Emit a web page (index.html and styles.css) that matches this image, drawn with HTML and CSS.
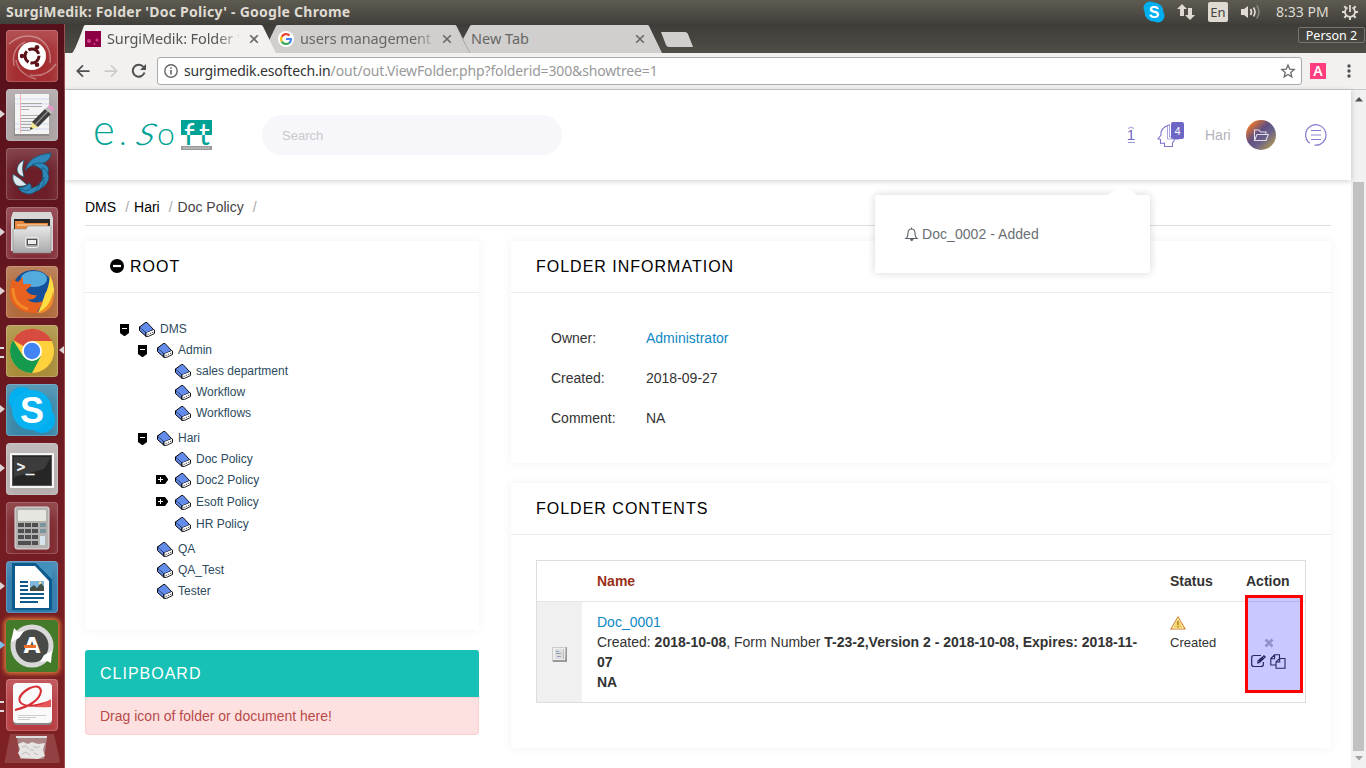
FILE: index.html
```html
<!DOCTYPE html>
<html lang="en">
<head>
<meta charset="utf-8">
<title>SurgiMedik: Folder 'Doc Policy'</title>
<link rel="stylesheet" href="styles.css">
</head>
<body>
<svg class="defs" width="0" height="0">
  <defs>
    <linearGradient id="steel" x1="0" y1="0" x2="0" y2="1"><stop offset="0" stop-color="#e8e8e8"/><stop offset="1" stop-color="#a9a9a9"/></linearGradient>
    <symbol id="book" viewBox="0 0 16 15"><path d="M.5 5 6.500 .5H8L14.500 7.500 7 10.500 .5 5Z" fill="#638cea" stroke="#000"/><path d="M.5 5V8.500L7 14.300V10.500Z" fill="#638cea" stroke="#000"/><path d="M7 10.500 14.500 7.500 15.500 8V11.500L9.500 14.400H7Z" fill="#fff" stroke="#000" stroke-width=".9"/><path d="M1 5.500 7 10.500 14 7.500 8 1.200Z" fill="#638cea"/><path d="M8.500 12.700 14.500 10" stroke="#000" stroke-width=".7" stroke-dasharray="1.500 1"/></symbol>
    <symbol id="open" viewBox="0 0 12 12"><path d="M0 0H9V9L5 12 4 12 0 9Z"/><path d="M2 4.500H7" stroke="#fff"/></symbol>
    <symbol id="closed" viewBox="0 0 12 12"><path d="M0 1H9L12 5 12 6 9 10H0Z"/><path d="M2 5.500H7M4.500 3V8" stroke="#fff"/></symbol>
    <symbol id="close" viewBox="0 0 10 10"><path d="M1.200 1.200 8.800 8.800M8.800 1.200 1.200 8.800" stroke="#686868" stroke-width="1.600"/></symbol>
  </defs>
</svg>

<header class="menubar">
  <span class="window-title">SurgiMedik: Folder 'Doc Policy' - Google Chrome</span>
  <div class="indicators">
    <svg class="ind-skype" viewBox="0 0 22 22"><circle cx="7" cy="7" r="6.500" fill="#00aff0"/><circle cx="15" cy="15" r="6.500" fill="#00aff0"/><circle cx="11" cy="11" r="9.500" fill="#00aff0"/><text x="11" y="17" text-anchor="middle" class="skype-mini">S</text></svg>
    <svg class="ind-net" viewBox="0 0 18 16" fill="#dfdbd2"><path d="M5 0 10 5H7V12H3V5H0ZM13 16 8 11H11V4H15V11H18Z"/></svg>
    <span class="lang">En</span>
    <svg class="ind-vol" viewBox="0 0 20 16"><path d="M0 5H3L7 2V14L3 11H0Z" fill="#dfdbd2"/><path d="M9.500 5Q11.500 8 9.500 11M12.500 3.500Q15.500 8 12.500 12.500" fill="none" stroke="#dfdbd2" stroke-width="1.700"/><path d="M15.800 1.500Q20 8 15.800 14.500" fill="none" stroke="#85837b" stroke-width="1.700"/></svg>
    <span class="clock">8:33 PM</span>
    <svg class="ind-gear" viewBox="0 0 16 16" fill="none" stroke="#dfdbd2"><path d="M5.500 3.600A5 5 0 1 0 10.500 3.600" stroke-width="1.700"/><path d="M8 1V8" stroke-width="1.800"/><path d="M0 8H3M13 8H16M8 13V16M2.300 2.300 4.300 4.300M13.700 2.300 11.700 4.300M2.300 13.700 4.300 11.700M13.700 13.700 11.700 11.700" stroke-width="2"/></svg>
  </div>
</header>

<div class="desktop">
<nav class="launcher">
  <div class="tile dash"><svg viewBox="0 0 52 52"><path d="M3 14Q16 2 32 8 46 16 44 33M8 36Q5 18 19 12M24 45Q40 48 50 34M10 30Q12 44 30 49" fill="none" stroke="#fff" stroke-opacity=".35" stroke-width="1.500"/><circle cx="26" cy="26" r="14" fill="#fff"/><circle cx="26" cy="26" r="7" fill="none" stroke="#5c1218" stroke-width="3" stroke-dasharray="12.500 2"/><circle cx="16" cy="26" r="2.300" fill="#5c1218"/><circle cx="31" cy="17.300" r="2.300" fill="#5c1218"/><circle cx="31" cy="34.700" r="2.300" fill="#5c1218"/></svg></div>
  <div class="tile editor running"><svg viewBox="0 0 52 52"><path d="M9 6H43V47H8Z" fill="#8f8b8b"/><path d="M9 5H43V45H9Z" fill="#f4f4f4"/><path d="M9 10H43M9 15H43M9 35H43M9 40H43" stroke="#cfdaf0"/><path d="M15 14.500H36M15 17.500H36M15 20.500H23M15 26.500H36M15 29.500H32M15 32.500H29M15 35.500H27M15 38.500H28M15 41.500H24" stroke="#aaa"/><path d="M14.500 5V44" stroke="#f4b6b6"/><path d="M24 41 26 33 32 38Z" fill="#f5e78c"/><path d="M26 33 39 20 45 25 32 38Z" fill="#3c3c3c"/><path d="M29 36 42 22" stroke="#888" stroke-width="1.500"/><path d="M39 20 41 18 47 23 45 25Z" fill="#bbb"/><path d="M41 18 44 16 48 19 47 23Z" fill="#e798ca"/><path d="M24 41 24.700 38 27 39.500Z" fill="#222"/></svg></div>
  <div class="tile shutter"><svg viewBox="0 0 52 52" fill="#2f86b8" stroke="#12536f" stroke-width=".7"><path d="M19 23Q22 7 45 5 45 13 35 16 24 16 19 23Z"/><path d="M26 17Q36 12 42 19 44 24 39 29 37 19 26 17Z"/><path d="M38 20Q46 28 41 35 38 40 34 40 38 30 36 20Z"/><path d="M38 29Q39 41 29 44 24 45 22 43 33 39 38 29Z"/><path d="M34 36Q29 47 22 46 15 45 12 40 25 43 34 36Z"/><path d="M18 12Q15 20 18 29 11 27 11 21 12 15 18 12Z" fill="#dce8ec"/><path d="M7 26Q14 30 21 37 12 40 9 36 6 32 7 26Z" fill="#dce8ec"/><path d="M12 40Q21 39 23 35 29 40 20 43Z"/></svg></div>
  <div class="tile files running"><svg viewBox="0 0 52 52"><path d="M7 5H45L47 11V44H5V11Z" fill="#d7d7d7"/><path d="M8 12H44V25H8Z" fill="#282828"/><path d="M9 19V14H17L19 16H42V24H9Z" fill="#e8863c"/><path d="M11 18H41" stroke="#fae2bb"/><path d="M7 22H20L22 19H45V46H7Z" fill="url(#steel)" stroke="#888" stroke-width=".6"/><rect x="19.500" y="30.500" width="13" height="10" rx="2" fill="#aaa" stroke="#eee"/><rect x="21.500" y="32.500" width="9" height="5" fill="#eee" stroke="#555"/></svg></div>
  <div class="tile firefox running"><svg viewBox="0 0 52 52"><circle cx="27" cy="25" r="21" fill="#14519a"/><ellipse cx="28" cy="13" rx="13" ry="8" fill="#53aadd"/><path d="M44 9Q51 24 46 34 42 43 32 47 37 35 39 28 43 22 44 9Z" fill="#ffdc3f"/><path d="M6 13 12 16 17 11 17 18 25 18 25 20 20 24Q23 30 31 29 28 35 21 33 27 39 37 35 34 43 30 47 13 48 6 36 2 28 5 19Z" fill="#e9611e"/><path d="M7 22Q7 39 22 43" fill="none" stroke="#f28a28" stroke-width="3"/><path d="M30 47Q44 43 47 25 50 42 36 47Z" fill="#f28a28"/></svg></div>
  <div class="tile chrome running multi active"><svg viewBox="0 0 52 52"><circle cx="26" cy="26" r="22" fill="#ffd23d"/><path d="M26 26 7 15A22 22 0 0 1 46 16H26Z" fill="#d84b3f"/><path d="M7 15A22 22 0 0 0 26 48L35 31 26 36 17 31Z" fill="#14994d"/><circle cx="26" cy="26" r="10" fill="#fff"/><circle cx="26" cy="26" r="8.200" fill="#4384f4"/></svg></div>
  <div class="tile skype running"><svg viewBox="0 0 52 52"><circle cx="16" cy="16" r="13" fill="#00aff0"/><circle cx="36" cy="36" r="13" fill="#00aff0"/><circle cx="26" cy="26" r="20" fill="#08b2f1"/><text x="26" y="39" text-anchor="middle" class="skype-letter">S</text></svg></div>
  <div class="tile terminal running"><svg viewBox="0 0 52 52"><rect x="4" y="10" width="44" height="35" fill="#f5f5f5"/><rect x="6.500" y="12.500" width="39" height="30" fill="#262626" stroke="#555"/><path d="M8 14H45L38 26 8 34Z" fill="#fff" opacity=".1"/><text x="10.500" y="29" class="prompt">&gt;_</text></svg></div>
  <div class="tile calc"><svg viewBox="0 0 52 52"><rect x="9" y="5" width="34" height="42" rx="2" fill="#b4b2ae" stroke="#ddd"/><rect x="12" y="8" width="28" height="11" rx="1" fill="#e4e6df"/><g fill="#4d4f50"><path d="M12 21h6v4h-6zM19 21h6v4h-6zM26 21h6v4h-6zM12 27h6v4h-6zM19 27h6v4h-6zM26 27h6v4h-6zM12 33h6v4h-6zM19 33h6v4h-6zM26 33h6v4h-6zM12 39h13v4h-13zM26 39h6v4h-6z"/></g><path d="M34 21h6v4h-6zM34 27h6v4h-6z" fill="#7d949f"/><path d="M34 34h5v9h-5z" fill="#d6e4ef"/></svg></div>
  <div class="tile writer running"><svg viewBox="0 0 52 52"><path d="M6 2H30L46 18V49H6Z" fill="#0d5a8c"/><path d="M30 2H46V18Z" fill="#438fbb"/><path d="M9 5H29L43 20V47H9Z" fill="#fff"/><path d="M14 21H22M14 25H22M14 29H22M14 33H38M14 37H38M14 41H32" stroke="#0d5a8c" stroke-width="2"/><rect x="24" y="20" width="14" height="10" fill="#7db9df"/><path d="M24 30V27L28 24 31 27 35 22 38 26V30Z" fill="#454e42"/><circle cx="34" cy="22" r="1.300" fill="#ffe08b"/></svg></div>
  <div class="tile updater running urgent"><svg viewBox="0 0 52 52"><circle cx="26" cy="26" r="19" fill="#484a48" stroke="#d8d8d8" stroke-width="5"/><path d="M5 22 8 8 12 12 18 11 13 18Z" fill="#fff"/><path d="M46 31 45 43 41 41 34 42 38 35Z" fill="#fff"/><text x="26" y="33" text-anchor="middle" class="updater-letter">A</text><rect x="18" y="25" width="12" height="3" fill="#ed702a"/></svg></div>
  <div class="tile reader running multi"><svg viewBox="0 0 52 52"><rect x="7" y="5" width="39" height="41" rx="4" fill="#888"/><rect x="7" y="4" width="39" height="40" rx="4" fill="#fafafa"/><path d="M9 31Q33 25 35 12 34 5 24 9 11 16 14 23 20 31 45 22" fill="none" stroke="#d72f35" stroke-width="2"/><path d="M19 27Q31 30 45 20V28Q30 29 19 27Z" fill="#e5575a"/><path d="M12 36.500H40M12 38.500H30M12 40.500H24" stroke="#ccc"/></svg></div>
  <div class="trash"><svg viewBox="0 0 56 30"><path d="M6 1H50L56 28Q56 30 54 30H2Q0 30 1 27Z" fill="#934043"/><path d="M13 4H43L40 26H16Z" fill="#aa8686"/><path d="M12 4H43" stroke="#ddd" stroke-width="2"/><path d="M14 11 19 9 24 11 28 9 34 11 41 10 39 17 41 23 34 26 17 25 14 20 16 16Z" fill="#e7e4e3"/><path d="M18 14 22 13 25 16M29 13 33 15 36 13M18 21 22 19 26 22M30 20 34 22M26 17 30 17" fill="none" stroke="#bbb"/></svg></div>
</nav>

<section class="browser">
  <div class="tabstrip">
    <div class="tab tab-active"><svg class="tab-shape" viewBox="0 0 206 29"><path d="M0 29Q3 27 12 1.500Q12.500 1 14 1H189Q190.500 1 191 2.500L204 29Z" fill="#f2f1f0"/></svg>
      <svg class="favicon" viewBox="0 0 16 16"><path d="M0 0H16V16H0Z" fill="#8e0045"/><g fill="#d34189"><circle cx="4" cy="10" r="2"/><circle cx="12" cy="9" r="1.500"/><circle cx="9.500" cy="13" r="1"/></g></svg>
      <span class="tab-label first">SurgiMedik: Folder '</span><svg class="tab-close"><use href="#close"/></svg></div>
    <div class="tab tab-mid"><svg class="tab-shape" viewBox="0 0 208 29"><path d="M0 29 13 2Q13.500 1 15 1H192Q193 1 193.500 2L207 29Z" fill="#d0cfcd"/><path d="M198 12 207 29" stroke="#aaa"/></svg>
      <svg class="favicon" viewBox="0 0 16 16"><circle cx="8" cy="8" r="8" fill="#fff"/><g fill="none" stroke-width="2.200"><path d="M3.700 5.700A5 5 0 0 1 11.600 4.500" stroke="#ea4335"/><path d="M3.700 5.700A5 5 0 0 0 3.800 10.600" stroke="#fbbc05"/><path d="M3.800 10.600A5 5 0 0 0 11.300 11.800" stroke="#34a853"/><path d="M11.300 11.800Q13 10.500 13 8H8" stroke="#4285f4"/></g></svg>
      <span class="tab-label second">users management</span><svg class="tab-close"><use href="#close"/></svg></div>
    <div class="tab tab-last"><svg class="tab-shape" viewBox="0 0 206 29"><path d="M6 15 13 2Q13.500 1 15 1H190Q191.500 1 192 2L205 29H12Z" fill="#d0cfcd"/></svg>
      <span class="tab-label third">New Tab</span><svg class="tab-close"><use href="#close"/></svg></div>
    <svg class="new-tab" viewBox="0 0 33 15"><path d="M0 0H24Q26 0 27 2L32 15H8Q6 15 5 13Z" fill="#d0cfcd"/></svg>
    <span class="profile">Person 2</span>
  </div>
  <div class="toolbar">
    <svg class="nav-icon" viewBox="0 0 16 16"><path d="M15.500 8H2M8 1.500 1.500 8 8 14.500" fill="none" stroke="#505050" stroke-width="2"/></svg>
    <svg class="nav-icon" viewBox="0 0 16 16"><path d="M.5 8H14M8 1.500 14.500 8 8 14.500" fill="none" stroke="#ccc" stroke-width="2"/></svg>
    <svg class="nav-icon reload" viewBox="0 0 16 16"><path d="M13.500 9.500A6 6 0 1 1 12.500 4" fill="none" stroke="#505050" stroke-width="2"/><path d="M15 1V7H9Z" fill="#505050"/></svg>
    <div class="omnibox">
      <svg class="info" viewBox="0 0 14 14"><circle cx="7" cy="7" r="6.200" fill="none" stroke="#666" stroke-width="1.400"/><path d="M7 6V10.500M7 3.200V4.700" stroke="#666" stroke-width="1.600"/></svg>
      <span class="url"><b>surgimedik.esoftech.in</b>/out/out.ViewFolder.php?folderid=300&amp;showtree=1</span>
      <svg class="star" viewBox="0 0 14 14"><path d="M7 1 8.700 5.100 13.200 5.500 9.800 8.400 10.800 12.900 7 10.500 3.200 12.900 4.200 8.400.8 5.500 5.300 5.100Z" fill="none" stroke="#6b6b6b" stroke-width="1.300"/></svg>
    </div>
    <span class="ext">A</span>
    <svg class="kebab" viewBox="0 0 4 14" fill="#505050"><circle cx="2" cy="2" r="1.700"/><circle cx="2" cy="7" r="1.700"/><circle cx="2" cy="12" r="1.700"/></svg>
  </div>

  <div class="viewport">
    <div class="page">
      <header class="site-header">
        <svg class="logo" viewBox="0 0 120 34">
          <defs><linearGradient id="ft" gradientUnits="userSpaceOnUse" x1="0" y1="0" x2="0" y2="30"><stop offset=".5" stop-color="#fff"/><stop offset=".5" stop-color="#00a296"/></linearGradient></defs>
          <rect x="86" y="0" width="31" height="15" fill="#00a296"/>
          <g class="logo-text"><text transform="translate(-2 25) scale(1.300 1.330)">e</text><text x="24" y="25">.</text><text transform="translate(38 25) skewX(-24) scale(1.350 1.330)">s</text><text x="62" y="25">o</text></g>
          <g class="logo-joined"><text x="89" y="25">f</text><text x="104" y="25">t</text></g>
          <rect x="86" y="26" width="31" height="4" fill="#999"/><path d="M88 28H115" stroke="#ddd" stroke-dasharray="2 .7"/>
        </svg>
        <div class="search">Search</div>
        <div class="user-tools">
          <svg class="tasks" viewBox="0 0 9 18"><path d="M1 2.500Q4-.5 7 2.500M1 16.500H8" fill="none" stroke="#9c97d8"/><text x="4" y="14" text-anchor="middle" class="tasks-num">1</text></svg>
          <div class="mind"><svg viewBox="0 0 27 26"><path d="M12 4Q3 7 4 14L1 18 3.500 18.500 3.500 22.500 7.500 22 7.500 25.500H15.500V22L18 18H22" fill="none" stroke="#7f78cc" stroke-width="1.100"/><path d="M10.500 5V18H20M12.500 3V16H22" fill="none" stroke="#aaa5dc"/></svg><span class="badge">4</span></div>
          <span class="user-name">Hari</span>
          <span class="avatar"><svg viewBox="0 0 16 13"><path d="M1.500 11V1H6L7.500 3H13V5.500M4 5.500H15.300L13 11.500H1.500Z" fill="none" stroke="#e0dce8" stroke-width="1.100"/></svg></span>
          <svg class="menu-icon" viewBox="0 0 22 22" fill="none"><path d="M6 20A10.200 10.200 0 1 1 11 21.200" transform="rotate(8 11 11)" stroke="#827cce" stroke-width="1.200"/><path d="M6 6.500H16M6 15.500H16" stroke="#827cce"/><path d="M6 11H16" stroke="#c4c1e9" stroke-width="2"/></svg>
        </div>
      </header>

      <aside class="notice"><svg class="bell" viewBox="0 0 13 14"><path d="M1 11.500Q3 10 3 5.500 3.500 2 6.500 2 9.500 2 10 5.500 10 10 12 11.500ZM6.500 2V.5" fill="none" stroke="#5b626b" stroke-width="1.100"/><path d="M5 12H8.500Q8.500 14 6.700 14 5 14 5 12Z" fill="#5b626b"/></svg>Doc_0002 - Added</aside>

      <main class="content">
        <div class="breadcrumb"><a>DMS</a><i>/</i><a>Hari</a><i>/</i><span>Doc Policy</span><i>/</i></div>
        <div class="columns">
          <div class="left">
            <section class="card tree-card">
              <h3><svg class="minus" viewBox="0 0 14 14"><circle cx="7" cy="7" r="7"/><path d="M3 7H11" stroke="#fff" stroke-width="2.200"/></svg>ROOT</h3>
              <ul class="tree">
                <li><svg class="toggle"><use href="#open"/></svg><svg class="book"><use href="#book"/></svg>DMS</li>
                <li class="l1"><svg class="toggle"><use href="#open"/></svg><svg class="book"><use href="#book"/></svg>Admin</li>
                <li class="l2"><svg class="book"><use href="#book"/></svg>sales department</li>
                <li class="l2"><svg class="book"><use href="#book"/></svg>Workflow</li>
                <li class="l2 branch-end"><svg class="book"><use href="#book"/></svg>Workflows</li>
                <li class="l1"><svg class="toggle"><use href="#open"/></svg><svg class="book"><use href="#book"/></svg>Hari</li>
                <li class="l2"><svg class="book"><use href="#book"/></svg>Doc Policy</li>
                <li class="l2 folded"><svg class="toggle"><use href="#closed"/></svg><svg class="book"><use href="#book"/></svg>Doc2 Policy</li>
                <li class="l2 folded"><svg class="toggle"><use href="#closed"/></svg><svg class="book"><use href="#book"/></svg>Esoft Policy</li>
                <li class="l2 branch-end"><svg class="book"><use href="#book"/></svg>HR Policy</li>
                <li class="l1"><svg class="book"><use href="#book"/></svg>QA</li>
                <li class="l1"><svg class="book"><use href="#book"/></svg>QA_Test</li>
                <li class="l1"><svg class="book"><use href="#book"/></svg>Tester</li>
              </ul>
            </section>
            <section class="clipboard"><h3>CLIPBOARD</h3><p>Drag icon of folder or document here!</p></section>
          </div>
          <div class="right">
            <section class="card info-card"><h3>FOLDER INFORMATION</h3>
              <dl><dt>Owner:</dt><dd><a class="link">Administrator</a></dd><dt>Created:</dt><dd>2018-09-27</dd><dt>Comment:</dt><dd>NA</dd></dl>
            </section>
            <section class="card contents-card"><h3>FOLDER CONTENTS</h3>
              <div class="doc-table">
                <div class="row head"><span></span><span class="name-head">Name</span><span>Status</span><span>Action</span></div>
                <div class="row body">
                  <div class="thumb"><svg viewBox="0 0 15 15"><path d="M0 0H15V15H0Z" fill="#999"/><path d="M0 0H14L13 13H1V15H0Z" fill="#ccc"/><path d="M1 1H13V13H1Z" fill="#eee"/><path d="M3 2H9L11 4V12H3Z" fill="#ddd"/><path d="M4 4.500H7M4 6.500H9M5 9.500H9" stroke="#91a0bb"/><path d="M11.500 2V12" stroke="#bbb"/></svg></div>
                  <div class="doc"><a class="link">Doc_0001</a><br>Created: <b>2018-10-08</b>, Form Number <b>T-23-2,Version 2 - 2018-10-08, Expires: 2018-11-<br>07<br>NA</b></div>
                  <div class="status"><svg viewBox="0 0 16 14"><path d="M8 1 15 13H1Z" fill="#ffe88b" stroke="#cc7b28" stroke-width="1.100"/><path d="M8 2.500 13.500 12H2.500Z" fill="#f3d166" stroke="#fff4c4" stroke-width=".7"/><path d="M8 5V9M8 10V11.500" stroke="#bd8a22" stroke-width="1.700"/></svg>Created</div>
                  <div class="actions">
                    <svg class="remove" viewBox="0 0 10 10"><path d="M1.500 1.500 8.500 8.500M8.500 1.500 1.500 8.500" stroke="#bbb" stroke-width="2.800"/></svg>
                    <div class="action-pair"><svg viewBox="0 0 16 14" fill="none" stroke="#333"><path d="M10 1.500H3Q.7 1.500.7 3.500V10.500Q.7 12.500 3 12.500H10Q12.300 12.500 12.300 10.500V8" stroke-width="1.200"/><path d="M6 9.500 6.500 6.500 13 1 15 3 8.500 9.300Z" fill="#333" stroke="none"/><path d="M7 7 8.500 8.500M11.500 2.500 13.500 4.500" stroke="#ccf" stroke-width=".7"/></svg><svg class="copy" viewBox="0 0 16 15" fill="none" stroke="#333" stroke-width="1.100"><path d="M6 11H.8V4.500L4.500.8H9.500V4M.8 4.800H4.600V.8M6 8 9.500 4.500H15V14.300H6ZM6 8H9.700V4.500"/></svg></div>
                  </div>
                </div>
                <div class="highlight"></div>
              </div>
            </section>
          </div>
        </div>
      </main>
    </div>
    <div class="scrollbar"><svg viewBox="0 0 8 5"><path d="M0 4.500 4 0 8 4.500Z" fill="#505050"/></svg><div class="thumb-bar"></div><svg viewBox="0 0 8 5"><path d="M0 0H8L4 4.500Z" fill="#a3a3a3"/></svg></div>
  </div>
</section>
</div>
</body>
</html>
```
FILE: styles.css
```css
* { box-sizing: border-box; }
body { margin: 0; width: 1366px; height: 768px; overflow: hidden; font: 14px/20px "Liberation Sans", Arial, sans-serif; color: #333; background: #fff; }
svg { display: block; flex: none; overflow: visible; }
.defs { position: absolute; }
h3, p, ul, dl, dd { margin: 0; padding: 0; }

.menubar { height: 24px; display: flex; justify-content: space-between; align-items: center; padding: 0 8px 0 6px; background: linear-gradient(#5e5b50, #56534b 30%, #403f3a); color: #dfdbd2; font-family: "Noto Sans", sans-serif; }
.window-title { font-size: 14px; font-weight: 700; letter-spacing: .25px; white-space: nowrap; }
.indicators { display: flex; align-items: center; }
.ind-skype { width: 22px; height: 22px; margin-right: 12px; }
.skype-mini { font: 700 16px "Liberation Sans", sans-serif; fill: #fff; }
.ind-net { width: 18px; height: 16px; margin-right: 13px; }
.lang { width: 20px; height: 20px; margin-right: 13px; background: #dfdbd2; border-radius: 2px; color: #45433e; font-size: 13px; line-height: 20px; text-align: center; }
.ind-vol { width: 20px; height: 16px; margin-right: 15px; }
.clock { width: 53px; margin-right: 13px; font-size: 14px; white-space: nowrap; letter-spacing: 0; }
.ind-gear { width: 16px; height: 16px; }

.desktop { height: 744px; display: flex; }
.launcher { width: 65px; padding: 6px 0 0 6px; background: linear-gradient(#55101a, #681820 40%, #7f2124); border-right: 1px solid #9a4f50; display: flex; flex-direction: column; gap: 7px; }
.tile { position: relative; width: 52px; height: 52px; flex: none; border-radius: 4px; box-shadow: inset 0 0 0 1px rgba(255,255,255,.18), inset 0 12px 14px rgba(255,255,255,.17); }
.tile svg { width: 52px; height: 52px; }
.dash { background: #a42e31; }
.editor { background: #aaa1a3; }
.shutter { background: #6c1f29; }
.files { background: #84303b; }
.firefox { background: #b06a3c; }
.chrome { background: #a98c38; }
.skype { background: #3a87a8; }
.terminal { background: #b6aeae; }
.calc { background: #7d272d; }
.writer { background: #2e79ab; }
.updater { background: #447b2b; }
.reader { background: #b73b40; }
.urgent { box-shadow: 0 0 4px 2px #dc7b3c; }
.running::before { content: ""; position: absolute; left: -6px; top: 21px; border: 4px solid transparent; border-left: 5px solid #dcd3d3; border-right: 0; }
.urgent::before { border-left-color: #79bfe8; }
.multi::before { border: 0; width: 4px; height: 7px; top: 22px; border-top: 2px solid #ddd; border-bottom: 2px solid #ddd; }
.active::after { content: ""; position: absolute; right: -6px; top: 21px; border: 4px solid transparent; border-right: 5px solid #dcd3d3; border-left: 0; }
.skype-letter { font: 700 36px "Liberation Sans", sans-serif; fill: #fff; }
.updater-letter { font: 700 22px "DejaVu Sans", sans-serif; fill: #fff; }
.prompt { font: 700 15px "DejaVu Sans Mono", monospace; fill: #eee; }
.trash { margin: -5px 0 0 -2px; }
.trash svg { width: 56px; height: 30px; }

.browser { width: 1301px; }
.tabstrip { height: 29px; padding-left: 7px; display: flex; background: linear-gradient(#3d3c38, #504e47); }
.tab { position: relative; height: 29px; display: flex; align-items: center; font-family: "Noto Sans", sans-serif; font-size: 14.500px; color: #666; }
.tab-shape { position: absolute; left: 0; top: 0; height: 29px; }
.tab-active { width: 191px; z-index: 3; padding-left: 13px; color: #555; }
.tab-active .tab-shape, .tab-last .tab-shape { width: 206px; }
.tab-mid { width: 194px; z-index: 2; padding-left: 15px; }
.tab-mid .tab-shape { width: 208px; }
.tab-last { width: 204px; padding-left: 14px; }
.favicon, .tab-label, .tab-close { position: relative; }
.favicon { width: 16px; height: 16px; }
.tab-label { white-space: nowrap; line-height: 20px; height: 22px; margin-left: 6px; }
.first { width: 134px; letter-spacing: -.1px; -webkit-mask-image: linear-gradient(90deg, #000 82%, transparent); mask-image: linear-gradient(90deg, #000 82%, transparent); }
.second { width: 134px; letter-spacing: -.1px; -webkit-mask-image: linear-gradient(90deg, #000 85%, rgba(0,0,0,.2)); mask-image: linear-gradient(90deg, #000 85%, rgba(0,0,0,.2)); }
.third { width: 158px; margin-left: 0; }
.tab-close { width: 10px; height: 10px; margin-left: 8px; }
.tab-last .tab-close { margin-left: 6px; }
.new-tab { width: 33px; height: 15px; margin: 8px 0 0 0; }
.profile { margin: 3px 1px 0 auto; height: 16px; width: 67px; border: 1px solid #77756e; border-radius: 2px; color: #fff; font: 12.500px/15px "Noto Sans", sans-serif; text-align: center; white-space: nowrap; }

.toolbar { height: 37px; padding: 0 15px 0 11px; background: #f2f1f0; border-bottom: 1px solid #cbcac8; display: flex; align-items: center; }
.nav-icon { width: 14px; height: 14px; margin-right: 14px; }
.reload { width: 16px; height: 16px; margin: 0 10px 0 -1px; }
.omnibox { width: 1145px; height: 28px; border: 1px solid #a9a9a9; border-radius: 3px; background: #fff; display: flex; align-items: center; padding: 0 6px; }
.info { width: 14px; height: 14px; margin-right: 6px; }
.url { flex: 1; font: 14px/20px "Noto Sans", sans-serif; color: #999; letter-spacing: -.15px; white-space: nowrap; }
.url b { font-weight: 400; color: #333; }
.star { width: 14px; height: 14px; }
.ext { width: 16px; height: 16px; margin: 0 21px 0 8px; background: #ff3d7f; color: #fff; font: 600 14px/16px "Noto Sans", sans-serif; text-align: center; }
.kebab { width: 4px; height: 14px; }

.viewport { height: 678px; display: flex; }
.page { position: relative; width: 1286px; }
.scrollbar { width: 15px; background: #f1f1f1; display: flex; flex-direction: column; align-items: center; justify-content: space-between; padding: 7px 0; }
.scrollbar svg { width: 8px; height: 5px; }
.thumb-bar { width: 11px; height: 571px; background: #c1c1c1; margin: 80px 0 5px; }

.site-header { position: relative; height: 90px; padding: 0 24px 0 30px; display: flex; align-items: center; background: #fff; box-shadow: 0 1px 6px rgba(0,0,0,.2); }
.logo { width: 120px; height: 34px; margin: 4px 47px 0 0; }
.logo-text { font: 300 32px Lato, sans-serif; fill: #00a296; }
.logo-joined { font: 400 30px Lato, sans-serif; fill: url(#ft); }
.search { width: 300px; height: 40px; padding-left: 20px; border-radius: 20px; background: #f6f6fb; color: #c9c9c9; font-size: 13px; line-height: 41px; }
.user-tools { margin-left: auto; display: flex; align-items: center; }
.tasks { width: 9px; height: 18px; margin-right: 21px; }
.tasks-num { font: 15px "Liberation Sans", sans-serif; fill: #6f68c3; }
.mind { position: relative; width: 27px; height: 26px; margin: -2px 21px 0 0; }
.badge { position: absolute; right: 0; top: 1px; width: 13px; height: 17px; border-radius: 2px; background: #6d66c5; color: #fff; font-size: 11px; line-height: 18px; text-align: center; }
.user-name { width: 27px; margin-right: 14px; color: #b3b3ba; }
.avatar { width: 30px; height: 30px; margin-right: 29px; border-radius: 50%; background: linear-gradient(135deg, #f17727 12%, #615080 42%, #69608a 60%, #aa9656 88%); display: grid; place-items: center; }
.avatar svg { width: 16px; height: 13px; }
.menu-icon { width: 22px; height: 22px; }

.notice { position: absolute; z-index: 5; left: 810px; top: 105px; width: 275px; height: 78px; padding-left: 30px; display: flex; align-items: center; background: #fff; border-radius: 3px; box-shadow: 0 0 9px rgba(0,0,0,.17); color: #6b6f75; letter-spacing: .05px; }
.notice::before { content: ""; position: absolute; right: 13px; top: -10px; border: 15px solid transparent; border-top: 0; border-bottom: 10px solid #fff; }
.bell { width: 13px; height: 14px; margin-right: 4px; }

.content { padding: 0 20px; }
.breadcrumb { height: 46px; padding-top: 17px; border-bottom: 1px solid #ddd; margin-bottom: 15px; display: flex; color: #444; }
.breadcrumb a { color: #000; }
.breadcrumb i { font-style: normal; color: #aaa; margin: 0 5px 0 9px; }
.columns { display: flex; gap: 32px; }
.left { width: 394px; display: flex; flex-direction: column; gap: 20px; }
.right { width: 820px; display: flex; flex-direction: column; gap: 20px; }
.card { background: #fff; box-shadow: 0 0 10px rgba(0,0,0,.06); }
.card h3 { height: 52px; padding-left: 25px; border-bottom: 1px solid #ebebf2; display: flex; align-items: center; color: #000; font-size: 16px; font-weight: 400; letter-spacing: 1px; }
.tree-card { height: 389px; }
.minus { width: 14px; height: 14px; margin: -1px 6px 0 0; }
.tree { list-style: none; padding: 25px 0 0 35px; font-size: 12px; color: #2c4a5e; }
.tree li { height: 21px; display: flex; align-items: center; padding-left: 0; }
.tree .l1 { padding-left: 18px; }
.tree .l2 { padding-left: 36px; }
.tree .branch-end { margin-bottom: 4px; }
.tree .folded { margin-bottom: 1px; }
.toggle { width: 12px; height: 12px; margin: 3px -12px 0 0; }
.folded .toggle { margin-top: 0; }
.book { width: 16px; height: 15px; margin: 1px 5px 0 19px; }
.clipboard { height: 85px; }
.clipboard h3 { height: 47px; padding-left: 15px; background: #17c1b5; border-radius: 3px 3px 0 0; color: #fff; font-size: 16px; font-weight: 400; line-height: 47px; letter-spacing: 1px; }
.clipboard p { height: 38px; padding-left: 14px; background: #fde1e1; border: 1px solid #fbcfd0; border-radius: 0 0 3px 3px; color: #b94a48; line-height: 36px; }
.info-card { height: 222px; }
.info-card dl { display: grid; grid-template-columns: 95px 1fr; grid-auto-rows: 40px; padding: 25px 0 0 40px; line-height: 40px; }
.link { color: #0f87c5; }
.contents-card { height: 265px; }
.doc-table { position: relative; width: 770px; height: 143px; margin: 25px 0 0 25px; border: 1px solid #ddd; }
.row { display: grid; grid-template-columns: 45px 588px 76px 1fr; }
.head { height: 41px; border-bottom: 1px solid #e6e6e6; line-height: 40px; font-weight: 700; }
.head .name-head { padding-left: 15px; color: #993016; }
.body { height: 100px; }
.thumb { background: #f0f0f0; display: grid; place-items: center; padding-top: 5px; }
.thumb svg { width: 15px; height: 15px; }
.doc { padding: 10px 0 0 15px; white-space: nowrap; }
.status { padding-top: 14px; font-size: 13px; line-height: 26px; }
.status svg { width: 16px; height: 14px; }
.actions { padding: 36px 0 0 5px; }
.remove { width: 10px; height: 10px; margin-left: 13px; }
.action-pair { display: flex; gap: 4px; margin-top: 6px; }
.action-pair svg { width: 16px; height: 14px; }
.action-pair .copy { height: 15px; margin-left: -1px; }
.highlight { position: absolute; left: 708px; top: 34px; width: 58px; height: 98px; border: 3px solid #f00; background: rgba(0,0,255,.21); }
```
